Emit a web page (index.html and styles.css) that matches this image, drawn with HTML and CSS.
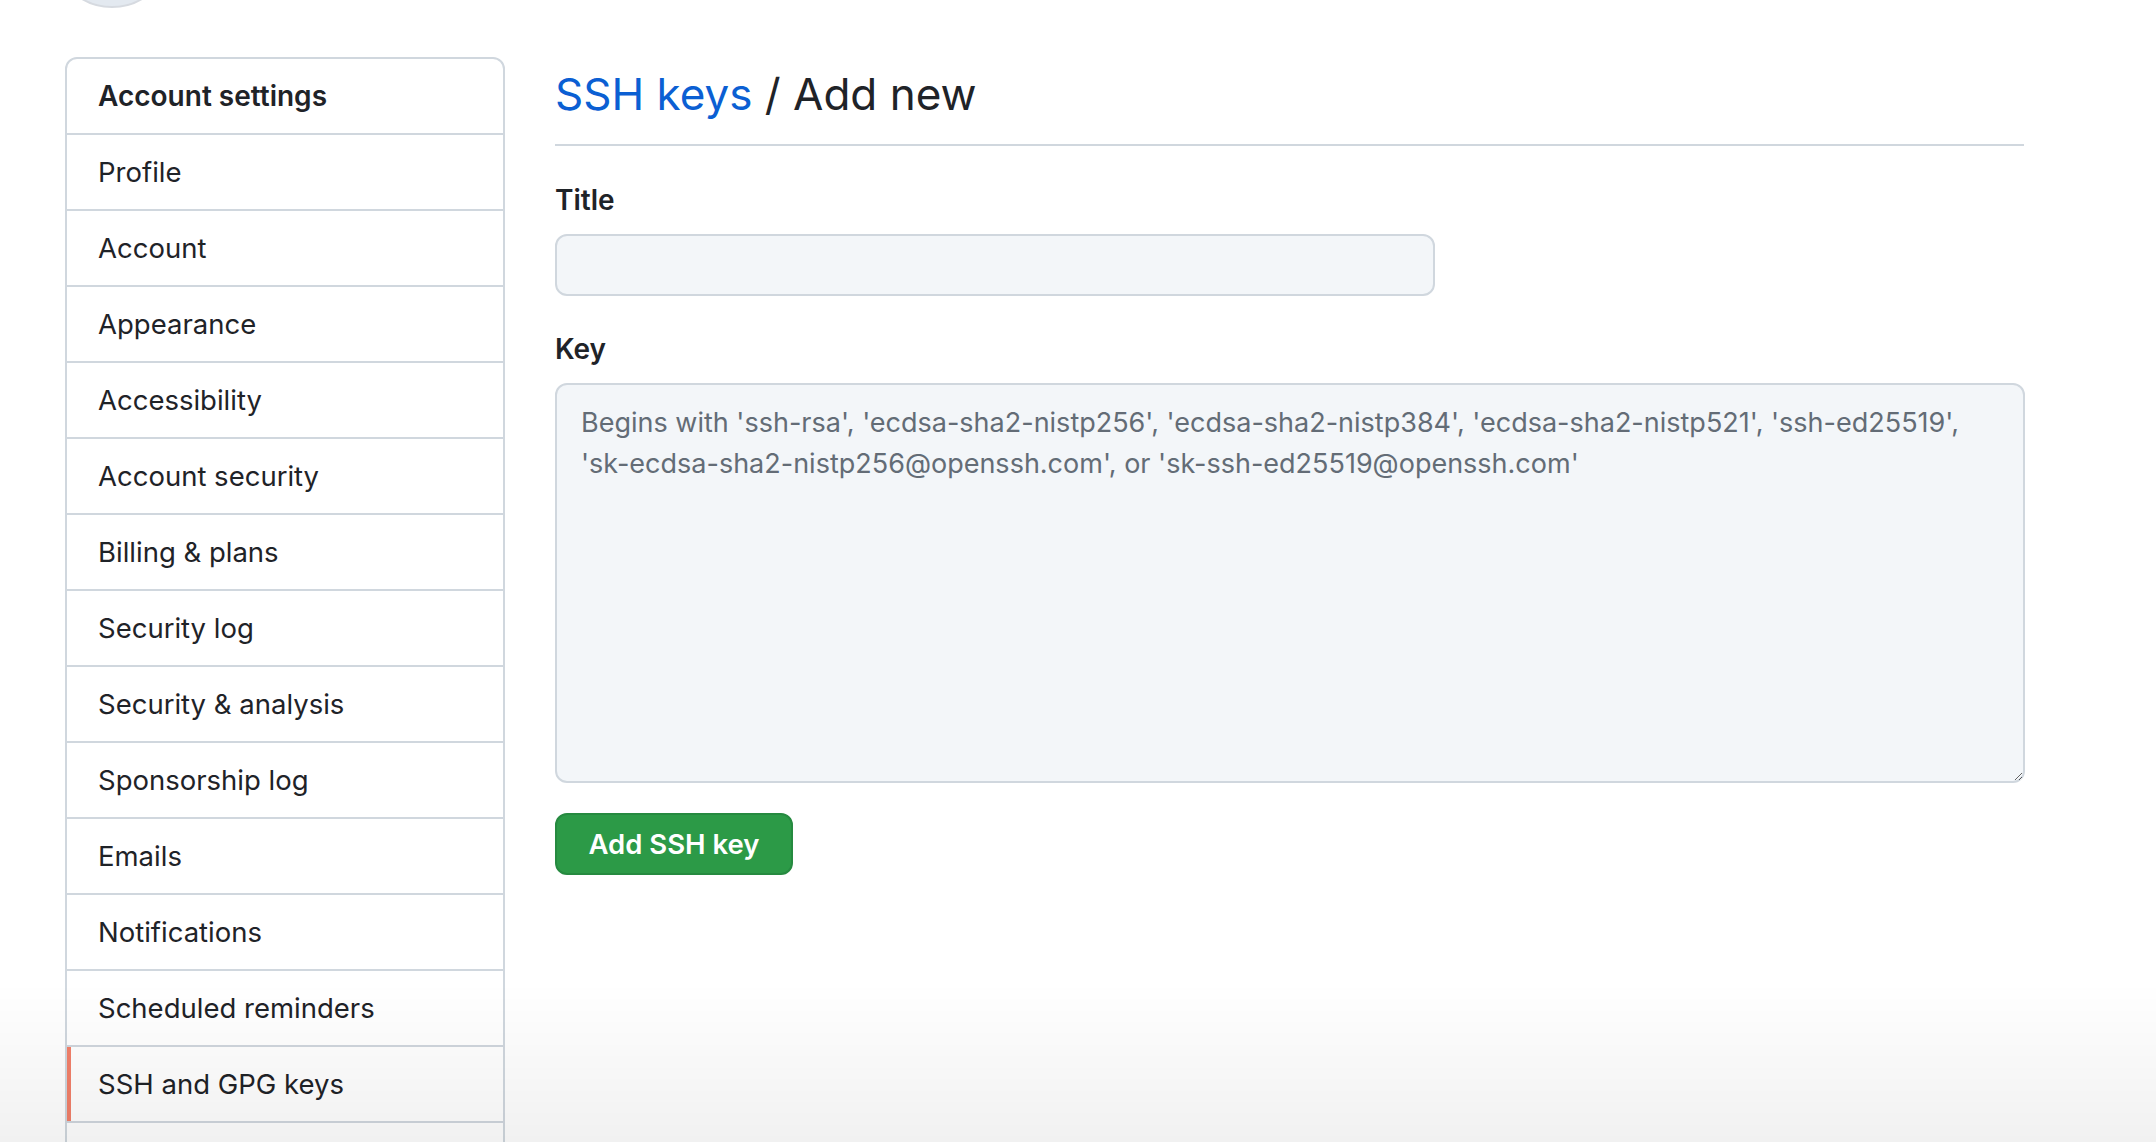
FILE: index.html
```html
<!DOCTYPE html>
<html lang="en">
<head>
<meta charset="utf-8">
<title>SSH keys / Add new</title>
<link rel="stylesheet" href="styles.css">
</head>
<body>
<div class="page">
  <div class="userbar">
    <div class="avatar"></div>
    <div class="username">jsmith-dev</div>
  </div>
  <div class="layout">
    <nav class="sidenav">
      <div class="nav-head">Account settings</div>
      <a class="nav-item">Profile</a>
      <a class="nav-item">Account</a>
      <a class="nav-item">Appearance</a>
      <a class="nav-item">Accessibility</a>
      <a class="nav-item">Account security</a>
      <a class="nav-item">Billing &amp; plans</a>
      <a class="nav-item">Security log</a>
      <a class="nav-item">Security &amp; analysis</a>
      <a class="nav-item">Sponsorship log</a>
      <a class="nav-item">Emails</a>
      <a class="nav-item">Notifications</a>
      <a class="nav-item">Scheduled reminders</a>
      <a class="nav-item selected">SSH and GPG keys</a>
      <a class="nav-item">Blocked users</a>
    </nav>
    <main class="content">
      <h1 class="subhead"><a class="crumb">SSH keys</a> / Add new</h1>
      <form class="form">
        <div class="group">
          <label class="label" for="title">Title</label>
          <input class="input" id="title" type="text">
        </div>
        <div class="group">
          <label class="label" for="key">Key</label>
          <textarea class="textarea" id="key" placeholder="Begins with 'ssh-rsa', 'ecdsa-sha2-nistp256', 'ecdsa-sha2-nistp384', 'ecdsa-sha2-nistp521', 'ssh-ed25519', 'sk-ecdsa-sha2-nistp256@openssh.com', or 'sk-ssh-ed25519@openssh.com'"></textarea>
        </div>
        <button class="btn" type="button">Add SSH key</button>
      </form>
    </main>
  </div>
</div>
<div class="fade"></div>
</body>
</html>
```
FILE: styles.css
```css
* { box-sizing: border-box; }
html, body { margin: 0; padding: 0; background: #ffffff; }
body {
  font-family: Inter, "Noto Sans", "Liberation Sans", sans-serif;
  color: #1f2328;
  height: 1142px;
  overflow: hidden;
}
.page { padding-left: 65px; }

.userbar {
  display: flex;
  align-items: flex-end;
  gap: 60px;
  margin-top: -112px;
  margin-left: -13px;
  height: 120px;
}
.avatar {
  width: 120px;
  height: 120px;
  flex: none;
  border-radius: 50%;
  background: #e3e9f0;
  border: 2px solid #d6dae0;
}
.username {
  font-size: 32px;
  line-height: 32px;
  font-weight: 600;
  padding-bottom: 50px;
}

.layout {
  display: flex;
  gap: 50px;
  margin-top: 49px;
  align-items: flex-start;
}

.sidenav {
  width: 440px;
  flex: none;
  border: 2px solid #d0d7de;
  border-radius: 12px;
  display: flex;
  flex-direction: column;
  background: #fff;
}
.nav-head, .nav-item {
  height: 76px;
  display: flex;
  align-items: center;
  padding-left: 31px;
  font-size: 27.5px;
  color: #1f2328;
  border-bottom: 2px solid #d0d7de;
  text-decoration: none;
}
.nav-head { font-weight: 600; font-size: 28px; }
.nav-item.selected { box-shadow: inset 4px 0 0 #f2806a; }

.content { width: 1469px; flex: none; }

.subhead {
  margin: 0;
  font-size: 44px;
  line-height: 60px;
  font-weight: 400;
  padding-top: 7px;
  padding-bottom: 20px;
  border-bottom: 2px solid #d0d7de;
  color: #1f2328;
}
.crumb { color: #0b5fd3; text-decoration: none; }

.form { padding-top: 34px; }
.group { display: flex; flex-direction: column; margin-bottom: 33px; }
.group + .group { margin-bottom: 30px; }
.label {
  font-size: 28px;
  line-height: 40px;
  font-weight: 600;
  margin-bottom: 14px;
}
.input {
  width: 880px;
  height: 62px;
  border: 2px solid #d0d7de;
  border-radius: 12px;
  background: #f3f6f9;
  font-family: inherit;
  font-size: 28px;
  padding: 0 24px;
}
.textarea {
  width: 1470px;
  height: 400px;
  border: 2px solid #d0d7de;
  border-radius: 12px;
  background: #f3f6f9;
  font-family: inherit;
  font-size: 27px;
  line-height: 41px;
  padding: 17px 24px;
  resize: vertical;
  color: #1f2328;
}
.textarea::placeholder { color: #636c76; opacity: 1; }

.btn {
  width: 238px;
  height: 62px;
  border: 2px solid #268a40;
  border-radius: 12px;
  background: #2c9a47;
  color: #fff;
  font-family: inherit;
  font-size: 27.5px;
  font-weight: 600;
}

.fade {
  position: fixed;
  left: 0;
  right: 0;
  bottom: 0;
  height: 160px;
  background: linear-gradient(to bottom, rgba(0,0,0,0), rgba(0,0,0,0.055));
  pointer-events: none;
}
```
